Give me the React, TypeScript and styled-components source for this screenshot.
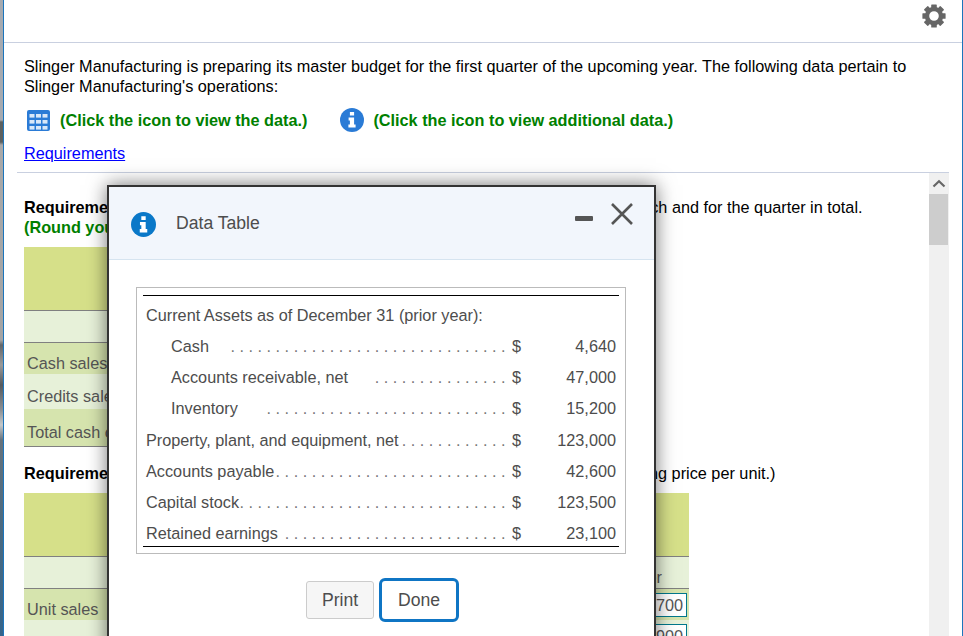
import React from 'react';
import styled, { createGlobalStyle } from 'styled-components';

const GlobalStyle = createGlobalStyle`
  html, body {
    margin: 0;
    padding: 0;
    background: #fff;
  }

  body {
    font-family: "Liberation Sans", Arial, sans-serif;
    font-size: 16.25px;
    line-height: 20px;
    color: #000;
  }
`;

const Page = styled.div`
  display: flex;
  width: 100%;
  height: 100vh;
  overflow: hidden;
`;

const DesktopStrip = styled.div`
  flex: 0 0 3px;
  background: linear-gradient(
    180deg,
    #a6aab0 0,
    #a6aab0 120px,
    #5c6060 122px,
    #5c6060 142px,
    #a9a9a9 145px,
    #a4a4a4 340px,
    #62666a 345px,
    #9a9a9a 365px,
    #555a5e 385px,
    #8c9094 410px,
    #c4c8ca 425px,
    #66727c 440px,
    #4c6a80 520px,
    #35648a 636px
  );
`;

const Window = styled.div`
  position: relative;
  flex: 1;
  display: flex;
  flex-direction: column;
  min-width: 0;
  background: #fff;
  border-left: 1px solid #1c75bc;
  border-right: 1px solid #1c75bc;
`;

const TopBar = styled.div`
  flex: 0 0 auto;
  display: flex;
  align-items: flex-start;
  justify-content: flex-end;
  height: 43px;
  padding: 4px 16px 0 0;
  box-sizing: border-box;
  border-bottom: 1px solid #c9d0e0;
`;

const Intro = styled.div`
  padding: 13px 20px 9px;
`;

const IntroText = styled.p`
  margin: 0;
  width: 900px;
`;

const ClickRow = styled.div`
  display: flex;
  align-items: center;
  height: 24px;
  margin-top: 12px;
  padding-left: 3px;
`;

const ClickItem = styled.span`
  display: flex;
  align-items: center;
  gap: 9px;
  margin-right: 33px;
`;

const GreenNote = styled.span`
  color: #008000;
  font-weight: bold;
`;

const RequirementsLink = styled.a`
  display: inline-block;
  margin-top: 11px;
  color: #0000ff;
  text-decoration: underline;
`;

const Question = styled.div`
  flex: 1;
  display: flex;
  min-height: 0;
  margin: 0 13px;
  border-top: 1px solid #c9d0e0;
`;

const Scroller = styled.div`
  flex: 1;
  min-width: 0;
  overflow: hidden;
  padding: 24px 0 0 7px;
`;

const Para = styled.p<{ $gap?: number }>`
  margin: ${(p) => p.$gap ?? 0}px 0 0;
  white-space: nowrap;
`;

const Bold = styled.b`
  font-weight: bold;
`;

const Scrollbar = styled.div`
  flex: 0 0 20px;
  display: flex;
  flex-direction: column;
  background: #f0f0f0;
`;

const ScrollButton = styled.div`
  flex: 0 0 21px;
  display: flex;
  align-items: center;
  justify-content: center;
`;

const ScrollThumb = styled.div`
  flex: 0 0 51px;
  margin-right: 1px;
  background: #cdcdcd;
`;

const AnswerTable = styled.div<{ $width: number; $gap: number }>`
  width: ${(p) => p.$width}px;
  margin-top: ${(p) => p.$gap}px;
  color: #555;
`;

const HeaderBand = styled.div`
  height: 63px;
  background: #d6e089;
  border-bottom: 1px solid #808080;
`;

const Row = styled.div<{ $height: number; $tone: 'dark' | 'light'; $line?: boolean }>`
  display: flex;
  align-items: center;
  justify-content: space-between;
  box-sizing: content-box;
  height: ${(p) => p.$height - 9}px;
  padding: 9px 0 0 3px;
  background: ${(p) => (p.$tone === 'dark' ? '#d6e4ae' : '#e7f1d9')};
  border-bottom: ${(p) => (p.$line ? '1px solid #808080' : 'none')};
`;

const HeadCell = styled.span`
  padding-right: 27px;
`;

const AmountInput = styled.input`
  align-self: flex-start;
  width: 58px;
  height: 24px;
  box-sizing: border-box;
  margin: -5px 2px 0 0;
  padding: 0 3px 0 0;
  border: 1px solid #00788c;
  background: #fff;
  color: #555;
  font: inherit;
  text-align: right;
  outline: none;
`;

const Modal = styled.div`
  position: absolute;
  left: 103px;
  top: 185px;
  width: 549px;
  height: 500px;
  box-sizing: border-box;
  background: #fff;
  border: 2px solid #333;
  box-shadow: 0 0 18px rgba(0, 0, 0, 0.55);
  color: #4d4d4d;
`;

const ModalHeader = styled.div`
  display: flex;
  align-items: center;
  height: 73px;
  box-sizing: border-box;
  padding: 2px 21px 0 22px;
  background: #f2f6fc;
  border-bottom: 1px solid #d6e4f0;
`;

const ModalTitle = styled.span`
  flex: 1;
  margin: -2px 0 0 20px;
  color: #4d4d4d;
  font-size: 17.6px;
`;

const WindowButtons = styled.div`
  display: flex;
  align-items: flex-start;
  gap: 18px;
  margin-top: -21px;
`;

const MinusGlyph = styled.svg`
  margin-top: 13px;
`;

const DataBox = styled.div`
  margin: 27px 28px 0 27px;
  padding: 7px 6px 6px;
  border: 1px solid #bbb;
`;

const DataRules = styled.div`
  border-top: 1px solid #000;
  border-bottom: 1px solid #000;
`;

const DataRow = styled.div`
  display: grid;
  grid-template-columns: minmax(0, 1fr) 20px 91px;
  align-items: center;
  box-sizing: border-box;
  height: 31.25px;
  padding: 6px 3px 0;
`;

const LabelCell = styled.div<{ $indent?: boolean }>`
  display: flex;
  justify-content: space-between;
  padding-left: ${(p) => (p.$indent ? 25 : 0)}px;
  white-space: nowrap;
`;

const Leader = styled.span`
  margin-right: -5px;
  letter-spacing: 4.5px;
  color: #777;
`;

const Dollar = styled.span`
  padding-left: 7px;
`;

const Amount = styled.span`
  text-align: right;
`;

const ModalFooter = styled.div`
  display: flex;
  align-items: center;
  justify-content: center;
  gap: 5px;
  margin-top: 24px;
  padding-left: 2px;
`;

const PrintButton = styled.button`
  width: 68px;
  height: 38px;
  padding: 0;
  border: 1px solid #ccc;
  border-radius: 3px;
  background: #f6f6f6;
  color: #4d4d4d;
  font: inherit;
  font-size: 17.6px;
`;

const DoneButton = styled(PrintButton)`
  width: 80px;
  height: 44px;
  border: 3px solid #0f75c4;
  border-radius: 6px;
  background: #fff;
`;

const GearIcon = () => (
  <svg width="24" height="24" viewBox="0 0 24 24">
    {[0, 45, 90, 135, 180, 225, 270, 315].map((deg) => (
      <rect key={deg} x="9.2" y="0.4" width="5.6" height="6" rx="0.6" fill="#666" transform={`rotate(${deg} 12 12)`} />
    ))}
    <circle cx="12" cy="12" r="7" fill="none" stroke="#666" strokeWidth="4.4" />
  </svg>
);

const InfoIcon = ({ fill, size }: { fill: string; size: number }) => (
  <svg width={size} height={size} viewBox="0 0 24 24">
    <circle cx="12" cy="12" r="12" fill={fill} />
    <path
      d="M9.9 4 H14.1 V7.6 H9.9 Z M8.6 9.6 H14.1 V16.4 H15.6 V19.6 H8.4 V16.4 H9.9 V12.6 H8.6 Z"
      fill="#fff"
    />
  </svg>
);

const TableIcon = () => (
  <svg width="24" height="21" viewBox="0 0 24 21">
    <rect width="23" height="21" rx="2" fill="#2a7bd6" />
    {[4, 10, 16].map((y) =>
      [2.5, 9, 15.5].map((x) => (
        <rect key={`${x}-${y}`} x={x} y={y} width="5" height="3.6" fill="#d8e7f8" />
      )),
    )}
  </svg>
);

const MinusIcon = () => (
  <MinusGlyph width="18" height="5" viewBox="0 0 18 5">
    <rect width="18" height="5" rx="1" fill="#555" />
  </MinusGlyph>
);

const CloseIcon = () => (
  <svg width="22" height="22" viewBox="0 0 22 22">
    <path d="M1 1 L21 21 M21 1 L1 21" stroke="#555" strokeWidth="2.6" fill="none" />
  </svg>
);

const ChevronUp = () => (
  <svg width="14" height="9" viewBox="0 0 14 9">
    <path d="M1.5 7.5 L7 2.2 L12.5 7.5" stroke="#666" strokeWidth="2.2" fill="none" />
  </svg>
);

const assets = [
  { label: 'Cash', indent: true, dots: 31, value: '4,640' },
  { label: 'Accounts receivable, net', indent: true, dots: 15, value: '47,000' },
  { label: 'Inventory', indent: true, dots: 27, value: '15,200' },
  { label: 'Property, plant, and equipment, net', dots: 12, value: '123,000' },
  { label: 'Accounts payable', dots: 26, value: '42,600' },
  { label: 'Capital stock', dots: 30, value: '123,500' },
  { label: 'Retained earnings', dots: 25, value: '23,100' },
];

const App = () => {
  return (
    <Page>
      <GlobalStyle />
      <DesktopStrip />
      <Window>
        <TopBar>
          <GearIcon />
        </TopBar>

        <Intro>
          <IntroText>
            Slinger Manufacturing is preparing its master budget for the first quarter of the upcoming
            year. The following data pertain to Slinger Manufacturing's operations:
          </IntroText>
          <ClickRow>
            <ClickItem>
              <TableIcon />
              <GreenNote>(Click the icon to view the data.)</GreenNote>
            </ClickItem>
            <ClickItem>
              <InfoIcon fill="#2a7bd6" size={24} />
              <GreenNote>(Click the icon to view additional data.)</GreenNote>
            </ClickItem>
          </ClickRow>
          <RequirementsLink href="#">Requirements</RequirementsLink>
        </Intro>

        <Question>
          <Scroller>
            <Para>
              <Bold>Requirement 1.</Bold> Prepare a schedule of cash collections for January, February,
              and March and for the quarter in total.
            </Para>
            <Para>
              <GreenNote>(Round your answers to the nearest dollar.)</GreenNote>
            </Para>
            <AnswerTable $width={600} $gap={10}>
              <HeaderBand />
              <Row $height={31} $tone="light" $line />
              <Row $height={31} $tone="dark">Cash sales</Row>
              <Row $height={35} $tone="light">Credits sales</Row>
              <Row $height={37} $tone="dark" $line>Total cash collections</Row>
            </AnswerTable>
            <Para $gap={16}>
              <Bold>Requirement 2.</Bold> Prepare a production budget for every month. (Assume this
              same selling price per unit.)
            </Para>
            <AnswerTable $width={665} $gap={10}>
              <HeaderBand />
              <Row $height={31} $tone="light" $line>
                <span />
                <HeadCell>Quarter</HeadCell>
              </Row>
              <Row $height={31} $tone="dark">
                Unit sales
                <AmountInput readOnly defaultValue="1,700" />
              </Row>
              <Row $height={31} $tone="light">
                <span />
                <AmountInput readOnly defaultValue="1,900" />
              </Row>
            </AnswerTable>
          </Scroller>
          <Scrollbar>
            <ScrollButton>
              <ChevronUp />
            </ScrollButton>
            <ScrollThumb />
          </Scrollbar>
        </Question>

        <Modal>
          <ModalHeader>
            <InfoIcon fill="#0a78c8" size={25} />
            <ModalTitle>Data Table</ModalTitle>
            <WindowButtons>
              <MinusIcon />
              <CloseIcon />
            </WindowButtons>
          </ModalHeader>
          <DataBox>
            <DataRules>
              <DataRow>
                <LabelCell>Current Assets as of December 31 (prior year):</LabelCell>
              </DataRow>
              {assets.map((a) => (
                <DataRow key={a.label}>
                  <LabelCell $indent={a.indent}>
                    {a.label}
                    <Leader>{'.'.repeat(a.dots)}</Leader>
                  </LabelCell>
                  <Dollar>$</Dollar>
                  <Amount>{a.value}</Amount>
                </DataRow>
              ))}
            </DataRules>
          </DataBox>
          <ModalFooter>
            <PrintButton>Print</PrintButton>
            <DoneButton>Done</DoneButton>
          </ModalFooter>
        </Modal>
      </Window>
    </Page>
  );
};

export default App;
